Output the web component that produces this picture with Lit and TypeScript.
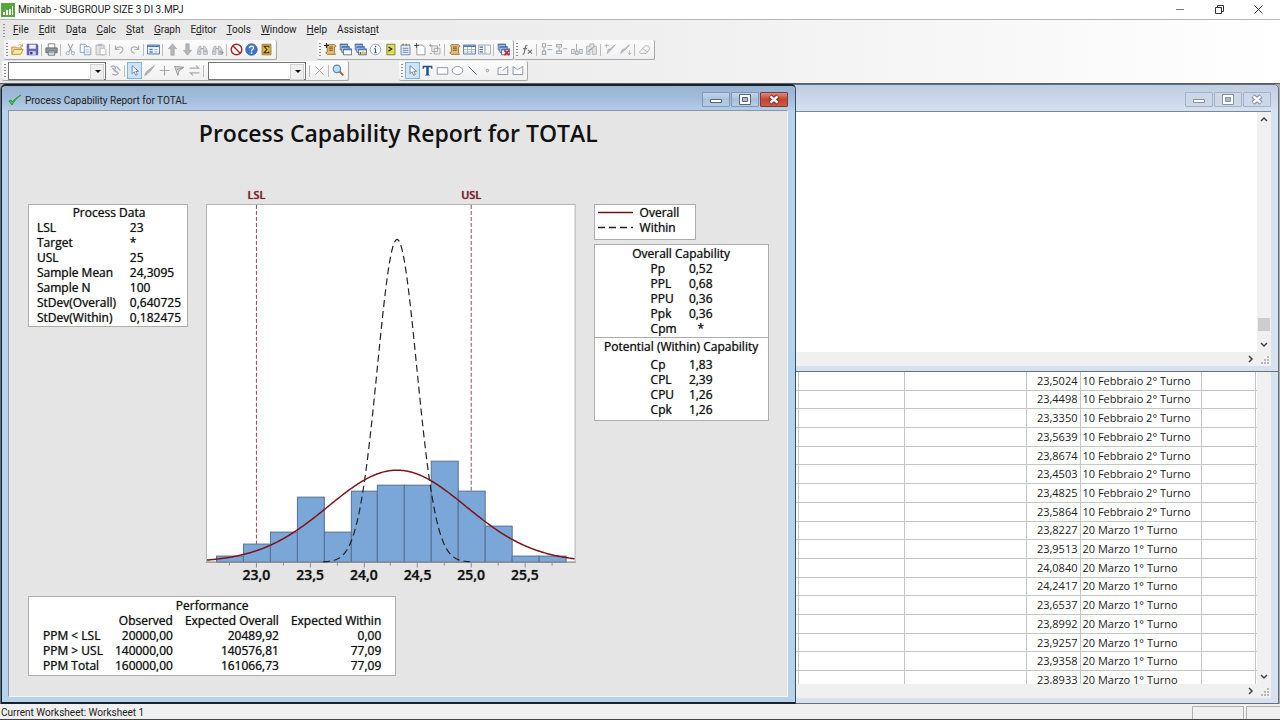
import { LitElement, css, html, svg, nothing, type TemplateResult, type SVGTemplateResult } from "lit";
import { customElement } from "lit/decorators.js";
import { classMap } from "lit/directives/class-map.js";

const GREY = "#a9acb0";
const NAVY = "#3d5a8a";

const scroll = svg`<path d="M4 2h9l2 2-2 1v7l1 2H4l-2-2 2-1V5L3 3z" fill="#e3bd72" stroke="#8f6b2c"/><path d="M6 5h5M6 7h5M6 9h5" stroke="#6d4f1c"/>`;
const windows = svg`<path d="M1.500 1.500h9v7h-9z" fill="#e9f1fb" stroke="${NAVY}"/><path d="M1 1h10v2H1z" fill="#4d79b8"/><path d="M3.500 4.500h9v7h-9z" fill="#e9f1fb" stroke="${NAVY}"/><path d="M3 4h10v2H3z" fill="#4d79b8"/><path d="M5.500 7.500h10v7h-10z" fill="#fff" stroke="${NAVY}"/><path d="M5 7h11v2H5z" fill="#4d79b8"/>`;
const arrow = svg`<path d="M5 2v10l2.500-2.500L9.500 14l2-1-2-4h3.500z" fill="#fff" stroke="#5c7390"/>`;
const binoculars = svg`<path d="M2 14V9l2-5h2v10zM9 14V4h2l3 5v5z" fill="#d6d8da" stroke="${GREY}"/><path d="M6 7h3M3 10h2M10 10h3" stroke="#85888c"/>`;

const ICONS: Record<string, SVGTemplateResult> = {
  open: svg`<path d="M1 14V5h5l1 1h6v3" fill="#f6d98c" stroke="#b58a2c"/><path d="M1 14l3-6h11l-3 6z" fill="#fbe6a4" stroke="#b58a2c"/><path d="M9 3c2-2 4-1 5 1m0-3v3h-3" fill="none" stroke="#c79a3a"/>`,
  save: svg`<path d="M1.500 1.500h12l1 1v12h-13z" fill="#6a65b4" stroke="#4a4794"/><path d="M4 2h8v5H4z" fill="#eef0fa"/><path d="M4 10h8v5H4z" fill="#c9cce6"/><path d="M5 11h3v3H5z" fill="#3d3a86"/>`,
  print: svg`<path d="M4 6V1h8v5" fill="#fff" stroke="#6d747c"/><path d="M1 6h14v6H1z" fill="#8e959c" stroke="#5e656c"/><path d="M4 10h8v5H4z" fill="#e8ecef" stroke="#5e656c"/><path d="M5 12h6" stroke="#6b8f6b"/>`,
  cut: svg`<path d="M5 1l5 10M11 1L6 11" stroke="#9fa2a6" stroke-width="1.300" fill="none"/><circle cx="4.500" cy="12.500" r="2" fill="none" stroke="#9fa2a6"/><circle cx="11" cy="12.500" r="2" fill="none" stroke="#9fa2a6"/>`,
  copy: svg`<path d="M1.500 1.500h6l2 2v8h-8z" fill="#fff" stroke="#7d8fa8"/><path d="M6.500 4.500h6l2 2v8h-8z" fill="#f4f8fd" stroke="#7d8fa8"/><path d="M8 8h4M8 10h5M8 12h5" stroke="#b6c3d4"/>`,
  paste: svg`<path d="M2.500 2.500h10v12h-10z" fill="#e3e4e6" stroke="${GREY}"/><path d="M5 1h5v3H5z" fill="#b8babd"/><path d="M7.500 6.500h5l2 2v6h-7z" fill="#fff" stroke="${GREY}"/>`,
  undo: svg`<path d="M3 3v5h5M3 8c3-5 10-4 9 1-.5 2-2 3-4 4" fill="none" stroke="${GREY}" stroke-width="1.500"/>`,
  redo: svg`<path d="M13 3v5H8M13 8C10 3 3 4 4 9c.5 2 2 3 4 4" fill="none" stroke="${GREY}" stroke-width="1.500"/>`,
  dialog: svg`<path d="M.5 2.500h15v11H.5z" fill="#eff5fc" stroke="${NAVY}"/><path d="M1 3h14v2H1z" fill="#4d79b8"/><path d="M3 7h4v2H3zM3 10h4v2H3z" fill="#5d7fb0"/><path d="M9 8h4M9 11h4" stroke="#8fa8c8"/>`,
  up: svg`<path d="M8 1l5 6h-3v8H6V7H3z" fill="#b4b6b9" stroke="#a6a9ac"/>`,
  down: svg`<path d="M8 15l5-6h-3V1H6v8H3z" fill="#b4b6b9" stroke="#a6a9ac"/>`,
  find: binoculars,
  findNext: svg`${binoculars}<path d="M10 12h5m-2-2l2 2-2 2" stroke="#85888c" fill="none"/>`,
  stop: svg`<circle cx="8" cy="8" r="6.500" fill="#fff" stroke="#a02a2a" stroke-width="1.800"/><path d="M3.500 3.500l9 9" stroke="#a02a2a" stroke-width="1.800"/>`,
  help: svg`<circle cx="8" cy="8" r="7" fill="#3c78c8" stroke="#2a5898"/><path d="M5.500 6.500c0-3.500 5-3.500 5-.5 0 2-2.500 2-2.500 4" fill="none" stroke="#fff" stroke-width="1.700"/><path d="M7 11.500h2v2H7z" fill="#fff"/>`,
  sigma: svg`<path d="M2.500 1.500h11v13h-11z" fill="#dcb64c" stroke="#94752a"/><path d="M11 5.500V4H5l3.500 4L5 12h6v-1.500" fill="none" stroke="#33290c" stroke-width="1.300"/>`,
  addScroll: svg`${scroll}<path d="M3 0v6M0 3h6" stroke="#222" stroke-width="1.300"/>`,
  scroll,
  windows,
  graphs: svg`${windows}<path d="M7 11h2v3H7z" fill="#2d7d46"/><path d="M10 10h2v4h-2z" fill="#d7b42a"/><path d="M13 11h1v3h-1z" fill="#c0392b"/>`,
  info: svg`<circle cx="8" cy="8" r="6.500" fill="#fff" stroke="#8395ad"/><path d="M8 7v5M6.500 7H8M6.500 12h3M8 3.500v1.700" stroke="#2d5a9c" stroke-width="1.500" fill="none"/>`,
  session: svg`<path d="M3.500 1.500h10v13h-10z" fill="#dde04f" stroke="#6c7034"/><path d="M5.500 5l4 2.500-4 2.500" fill="none" stroke="#222" stroke-width="1.500"/>`,
  notepad: svg`<path d="M2.500 2.500h11v12h-11z" fill="#e7eefb" stroke="#5a74a8"/><path d="M4 2h2M8 2h2M12 2h1" stroke="#9a7b2b" stroke-width="2"/><path d="M4.500 6.500h7M4.500 9h7M4.500 11.500h7" stroke="#5a74a8"/>`,
  newPage: svg`<path d="M3.500 2.500h7l3 3v9h-10z" fill="#fff" stroke="#888"/><path d="M3 0v6M0 3h6" stroke="#333"/>`,
  layers: svg`<path d="M3.500 3.500h7v7h-7zM6.500 6.500h7v7h-7z" fill="#f1f1f2" stroke="#9a9da1"/><path d="M2 1v4M0 3h4M13 1v3M1 13h3" stroke="#9a9da1"/>`,
  table: svg`<path d="M.5 2.500h15v11H.5z" fill="#fff" stroke="${NAVY}"/><path d="M1 3h14v2H1z" fill="#4d79b8"/><path d="M1 8h14M1 11h14M5.500 5v8M10.500 5v8" stroke="#9db2d0"/>`,
  panel: svg`<path d="M.5 2.500h15v11H.5z" fill="#f4f6f8" stroke="#8d99a8"/><path d="M8.500 3v10" stroke="#8d99a8"/><path d="M2 5h4M2 8h4M2 11h4" stroke="#49699b" stroke-width="1.400"/>`,
  closeAll: svg`${windows}<path d="M9 9l6 6M15 9l-6 6" stroke="#d0202a" stroke-width="2"/>`,
  fx: svg`<path d="M8 3c-2-1-2.500 1-3 4l-1 5c-.3 1.500-1 2-2 1.500M2.500 7h5M8.500 8.500l5 4.500M13.500 8.500l-5 4.500" fill="none" stroke="#6f7276" stroke-width="1.400"/>`,
  tree1: svg`<path d="M3 1h4v4H3zM3 10h4v4H3zM5 5v5M9 3h6M9 8h6" fill="none" stroke="${GREY}" stroke-width="1.300"/>`,
  tree2: svg`<path d="M2 2h6v3H2zM2 10h6v3H2zM5 5v5M10 7h5" fill="none" stroke="${GREY}" stroke-width="1.300"/>`,
  tree3: svg`<path d="M8 1v9M2 8h3v5H2zM7 10h3v4H7zM12 8h3v5h-3z" fill="none" stroke="${GREY}" stroke-width="1.300"/>`,
  group: svg`<path d="M2 4h4V1h5v3h3v10H9V8H6v6H2z" fill="#e0e1e3" stroke="${GREY}"/><path d="M3 11l9-7" stroke="#8d9094"/>`,
  brushUp: svg`<path d="M14 2L8 9l-4 4 1-5 3-1z" fill="#c4c6c9" stroke="${GREY}"/><path d="M3 1v5M1 3h5" stroke="${GREY}"/>`,
  brushDown: svg`<path d="M13 2L7 9l-5 4 2-5 3-1z" fill="#c4c6c9" stroke="${GREY}"/><path d="M13 9v5M11 12l2 2 2-2" stroke="${GREY}" fill="none"/>`,
  eraser: svg`<path d="M2 11l6-7c3-2 7 0 6 4l-4 5H4c-2 0-2-1-2-2zM6 7l6 4" fill="#f1f1f2" stroke="${GREY}"/>`,
  editGroup: svg`<path d="M2 4c3-4 8 0 5 3s4 1 4 4-6 3-7 1M4 5l8 7M9 3l5 5" fill="none" stroke="${GREY}" stroke-width="1.500"/>`,
  select: arrow,
  brush: svg`<path d="M14 2L9 9c-2 1-3 4-7 5 1-2 1-4 4-6z" fill="#b4b6b9" stroke="#a3a6aa"/>`,
  plus: svg`<path d="M8 2v12M2 8h12" stroke="#a3a6aa" stroke-width="1.400"/>`,
  flag: svg`<path d="M2 3l11 1-6 5-1 5zM13 4L5 7" fill="#d5d6d8" stroke="#97999d" stroke-width="1.200"/>`,
  swap: svg`<path d="M2 5h11l-3-3M14 11H3l3 3" fill="none" stroke="#a6a8ab" stroke-width="1.500"/>`,
  cross: svg`<path d="M3 3l10 10M13 3L3 13" stroke="#a6a8ab" stroke-width="1.200"/>`,
  zoom: svg`<path d="M9 9l5 5" stroke="#a86a2c" stroke-width="2.500"/><circle cx="6" cy="6" r="4.500" fill="#bfe0fa" stroke="#5b87b8" stroke-width="1.500"/>`,
  text: svg`<path d="M2 2h12v4h-1l-1-2H9.500v9l2 1H4.500l2-1V4H4L3 6H2z" fill="#1f4e94"/>`,
  rect: svg`<path d="M1.500 4.500h13v8h-13z" fill="#fff" stroke="#7583a0"/>`,
  ellipse: svg`<ellipse cx="8" cy="8" rx="6.500" ry="5" fill="#fff" stroke="#7583a0"/>`,
  line: svg`<path d="M3 3l10 10" stroke="#53688f" stroke-width="1.200"/>`,
  marker: svg`<circle cx="8" cy="8" r="1.500" fill="#fff" stroke="#7583a0"/>`,
  polyline: svg`<path d="M7 4L2.500 5v8h12V3L8 8" fill="none" stroke="#7583a0"/>`,
  polygon: svg`<path d="M2.500 3v10h12V3L8 7z" fill="#fff" stroke="#7583a0"/>`,
};

type Item = [string, string] | "|";

const STANDARD: Item[] = [
  ["open", "Open"], ["save", "Save"], "|", ["print", "Print"], "|",
  ["cut", "Cut"], ["copy", "Copy"], ["paste", "Paste"], "|",
  ["undo", "Undo"], ["redo", "Redo"], "|", ["dialog", "Edit last dialog"], "|",
  ["up", "Previous command"], ["down", "Next command"], ["find", "Find"], ["findNext", "Find next"], "|",
  ["stop", "Cancel"], ["help", "Help"], ["sigma", "StatGuide"],
];
const PROJECT: Item[] = [
  ["addScroll", "Show session folder"], ["windows", "Show worksheets folder"], ["graphs", "Show graphs folder"],
  ["info", "Show info"], ["session", "Show history"], ["notepad", "Show report pad"],
  ["newPage", "Related documents"], ["layers", "Show design"], "|",
  ["scroll", "Session window"], ["table", "Current data window"], ["panel", "Project manager"], "|",
  ["closeAll", "Close all graphs"],
];
const WORKSHEET: Item[] = [
  ["fx", "Assign formula"], "|", ["tree1", "Insert cell"], ["tree2", "Insert row"], ["tree3", "Insert column"],
  ["group", "Move columns"], "|", ["brushUp", "Previous brushed row"], ["brushDown", "Next brushed row"], "|",
  ["eraser", "Clear"],
];
const GRAPH_TOOLS: Item[] = [
  ["select", "Select"], ["brush", "Brush"], ["plus", "Crosshairs"], ["flag", "Plant flag"], ["swap", "Swap"],
];
const DRAWING: Item[] = [
  ["select", "Select object"], ["text", "Text"], ["rect", "Rectangle"], ["ellipse", "Ellipse"],
  ["line", "Line"], ["marker", "Marker"], ["polyline", "Polyline"], ["polygon", "Polygon"],
];

const MENUS: [string, string, string][] = [
  ["", "F", "ile"], ["", "E", "dit"], ["D", "a", "ta"], ["", "C", "alc"], ["", "S", "tat"], ["", "G", "raph"],
  ["E", "d", "itor"], ["", "T", "ools"], ["", "W", "indow"], ["", "H", "elp"], ["Assista", "n", "t"],
];

const PROCESS_DATA = [
  ["LSL", "23"], ["Target", "*"], ["USL", "25"], ["Sample Mean", "24,3095"], ["Sample N", "100"],
  ["StDev(Overall)", "0,640725"], ["StDev(Within)", "0,182475"],
];
const OVERALL = [["Pp", "0,52"], ["PPL", "0,68"], ["PPU", "0,36"], ["Ppk", "0,36"], ["Cpm", "*"]];
const POTENTIAL = [["Cp", "1,83"], ["CPL", "2,39"], ["CPU", "1,26"], ["Cpk", "1,26"]];
const PERFORMANCE = [
  ["PPM < LSL", "20000,00", "20489,92", "0,00"],
  ["PPM > USL", "140000,00", "140576,81", "77,09"],
  ["PPM Total", "160000,00", "161066,73", "77,09"],
];

const FEB = "10 Febbraio 2° Turno";
const MAR = "20 Marzo 1° Turno";
const ROWS = [
  ["23,5024", FEB], ["23,4498", FEB], ["23,3350", FEB], ["23,5639", FEB], ["23,8674", FEB], ["23,4503", FEB],
  ["23,4825", FEB], ["23,5864", FEB], ["23,8227", MAR], ["23,9513", MAR], ["24,0840", MAR], ["24,2417", MAR],
  ["23,6537", MAR], ["23,8992", MAR], ["23,9257", MAR], ["23,9358", MAR], ["23,8933", MAR],
];

@customElement("capability-chart")
class CapabilityChart extends LitElement {
  static styles = css`
    :host { display: block; }
    .chart { display: block; width: 100%; font-family: "Open Sans", "Noto Sans", sans-serif; font-weight: 600; }
    .limit { font-size: 11px; fill: #8b1a2b; text-anchor: middle; }
    .tick { font-size: 14px; fill: #111; text-anchor: middle; }
  `;

  private counts = [1, 3, 5, 11, 5, 12, 13, 13, 17, 12, 6, 1, 1];
  private left = 0.5;
  private top = 20.5;
  private right = 369.5;
  private base = 378.5;

  private x(value: number) {
    return 50.5 + (value - 23) * 107.5;
  }

  private curve(sigma: number, from: number, to: number) {
    const mean = 24.3095;
    const peak = (92 * 0.640725) / sigma;
    const points: string[] = [];
    for (let px = from; px <= to; px += 1) {
      const z = ((px - 50.5) / 107.5 + 23 - mean) / sigma;
      points.push(`${px},${(this.base - peak * Math.exp((-z * z) / 2)).toFixed(2)}`);
    }
    return points.join(" ");
  }

  render() {
    const ticks = Array.from({ length: 13 }, (_, i) => 22.75 + i * 0.25);
    return html`<svg class="chart" viewBox="0 0 370 402" role="img" aria-label="Capability histogram">
      <rect x=${this.left} y=${this.top} width=${this.right - this.left} height=${this.base - this.top} fill="#fff" stroke="#b3b3b3"></rect>
      ${[["LSL", 23], ["USL", 25]].map(([name, v]) => svg`
        <text class="limit" x=${this.x(v as number)} y="15">${name}</text>
        <path d="M${Math.floor(this.x(v as number)) + 0.5} 21V378" stroke="#9a4a52" stroke-dasharray="4 2"/>`)}
      ${this.counts.map((n, i) => {
        const x0 = Math.round(this.x(22.625 + i * 0.25)) + 0.5;
        const x1 = Math.round(this.x(22.875 + i * 0.25)) + 0.5;
        const h = Math.round(n * 5.92);
        return svg`<rect x=${x0} y=${this.base - h} width=${x1 - x0} height=${h} fill="#7ba6d8" stroke="#56708f"/>`;
      })}
      <path d="M0 378.5H370" stroke="#8d8d8d"/>
      ${ticks.map((v, i) => svg`<path d="M${Math.floor(this.x(v)) + 0.5} 379v${i % 2 ? 5 : 3}" stroke="#8d8d8d"/>`)}
      <polyline points=${this.curve(0.182475, 117, 264)} fill="none" stroke="#222" stroke-width="1.2" stroke-dasharray="7 4"></polyline>
      <polyline points=${this.curve(0.640725, 1, 369)} fill="none" stroke="#7c1518" stroke-width="1.5"></polyline>
      ${["23,0", "23,5", "24,0", "24,5", "25,0", "25,5"].map((t, i) => svg`<text class="tick" x=${this.x(23 + i * 0.5)} y="396">${t}</text>`)}
    </svg>`;
  }
}

@customElement("app-root")
class AppRoot extends LitElement {
  static styles = css`
    :host {
      display: flex; flex-direction: column; height: 100vh; overflow: hidden; box-sizing: border-box;
      font: 10px/14px Roboto, "Noto Sans", sans-serif; color: #222; background: #f0f0f0;
    }
    * { box-sizing: border-box; }
    button { font: inherit; color: inherit; background: none; border: 0; padding: 0; margin: 0; }
    svg { display: block; }
    table { border-collapse: collapse; border-spacing: 0; }
    td, th { padding: 0; font-weight: inherit; text-align: left; }

    .titlebar { display: flex; align-items: center; height: 20px; background: #fff; border-bottom: 1px solid #b5b5b5; padding: 0 2px 0 1px; gap: 3px; flex: none; }
    .titlebar h1 { font: inherit; margin: 0; flex: 1; }
    .captions { display: flex; }
    .caption-button { width: 39px; height: 19px; display: grid; place-items: center; }

    .bars { flex: none; background: linear-gradient(90deg, #e6e6e6, #efefef 50%, #fff); }
    .menubar { display: flex; height: 20px; align-items: center; gap: 10px; padding-left: 3px; }
    .grip { flex: none; width: 2px; height: 13px; background: repeating-linear-gradient(#8f8f8f 0 1px, transparent 1px 3px); }
    .menubar .grip { margin-right: -2px; }
    .toolrow { display: flex; height: 21px; }
    .toolrow + .toolrow { height: 22px; }
    .toolbar { display: flex; align-items: center; height: 20px; padding: 0 2px; background: linear-gradient(#fcfcfc, #f0f0f0); border-right: 1px solid #a8a8a8; border-bottom: 1px solid #a8a8a8; border-radius: 2px; }
    .standard { margin-left: 4px; }
    .project { margin-left: 40px; }
    .graph-tools { margin-left: 2px; }
    .drawing { margin-left: 50px; }
    .tool { width: 15px; height: 17px; display: grid; place-items: center; flex: none; }
    .grip + .tool { margin-left: 2px; }
    .selected { background: #cfe5f7; outline: 1px solid #7db3de; outline-offset: -1px; }
    .separator { width: 1px; height: 12px; background: #bcbcbc; margin: 0 2px 0 1px; flex: none; }
    .combo { position: relative; display: block; width: 98px; height: 18px; margin: 0 2px; }
    .combo select { appearance: none; width: 100%; height: 100%; border: 1px solid #777; background: #fff; border-radius: 0; font: inherit; padding: 0; }
    .combo::after { content: ""; position: absolute; right: 2px; top: 2px; width: 12px; height: 14px; pointer-events: none; background: #efefef; border: 1px solid #d2d2d2; }
    .combo::before { content: ""; position: absolute; z-index: 1; right: 5px; top: 8px; pointer-events: none; border: 3px solid transparent; border-top-color: #111; border-bottom: 0; }

    .workspace { position: relative; flex: 1; min-height: 0; background: #ababab; border-top: 1px solid #5a5d60; }
    .window { position: absolute; display: flex; flex-direction: column; border: 1px solid #5f7080; border-radius: 5px 5px 0 0; background: #d7e2ee; padding: 0 7px 5px 6px; }
    .session { left: 0; right: 1px; top: 0; height: 288px; }
    .worksheet { left: 0; right: 1px; top: 287px; bottom: 0; border-radius: 0; }
    .report { left: 1px; top: 0; bottom: 0; width: calc(62% + 1px); border: 2px solid #16242d; border-right: 1px solid #35505f; border-left-width: 1px; background: #b7d3ec; }
    .window-title { display: flex; align-items: center; height: 26px; flex: none; margin: 0 -7px 0 -6px; padding: 3px 7px 0 6px; gap: 1px; border-radius: 5px 5px 0 0; background: linear-gradient(#c0cddf, #d5e1f0); }
    .report .window-title { background: linear-gradient(#98b2d2, #a4bddb 55%, #b4cde8); height: 24px; }
    .window-title h2 { flex: 1; font: inherit; margin: 2px 0 0 2px; }
    .frame-button { width: 28px; height: 15px; display: grid; place-items: center; border: 1px solid #8198b4; border-radius: 1px; background: linear-gradient(#c3d6ea, #a8c1dd 50%, #b5cde6); }
    .session .frame-button { background: #ccd8e8; border-color: #a2b2c7; }
    .report .close { background: linear-gradient(#dc8a7c, #c4452e 50%, #cf5a41); border-color: #7e3a3a; }
    .client { flex: 1; min-height: 0; min-width: 0; border-top: 1px solid #7b8794; display: grid; grid-template: minmax(0, 1fr) 14px / minmax(0, 1fr) 14px; background: #fff; }
    .worksheet .client { border-top: 0; }
    .pane { overflow: hidden; background: #fff; }
    .vbar, .hbar { display: flex; background: #f0f0f0; align-items: center; }
    .vbar { flex-direction: column; justify-content: space-between; padding: 2px 0; }
    .thumb { width: 12px; height: 13px; background: #cdcdcd; margin-top: auto; margin-bottom: 9px; }
    .hbar { justify-content: flex-end; padding-right: 2px; }
    .corner { display: grid; place-items: end; padding: 2px; background: #f0f0f0; }

    .sheet { table-layout: fixed; width: 100%; height: 318px; font: 11px/14px "Open Sans", "Noto Sans", sans-serif; }
    .sheet td { border-right: 1px solid #c3c8c5; border-bottom: 1px solid #c3c8c5; white-space: nowrap; padding: 0 2px; }
    .sheet .number { text-align: right; }
    .w-edge { width: 2px; } .w-date { width: 121px; } .w-small { width: 54px; } .w-mid { width: 122px; } .w-wide { width: 106px; }
    .sheet .edge { padding: 0; border-right: 0; }

    .graph { flex: 1; min-height: 0; overflow: hidden; border: 1px solid #8896a3; border-right-color: #f5f5f5; border-bottom-color: #f5f5f5; background: #e5e5e5; padding: 0 18px 0 19px; color: #111; font: 12px/15px "Open Sans", "Noto Sans", sans-serif; text-shadow: 0 0 1px #555; }
    .graph h3 { font-size: 23px; line-height: 30px; font-weight: 600; text-align: center; margin: 7px 0 36px; text-shadow: none; }
    .layout { display: grid; grid-template-columns: 160px minmax(0, 1fr) 175px; column-gap: 18px; align-items: start; }
    .box { background: #fff; border: 1px solid #adadad; }
    .below { margin-top: 20px; }
    .box caption { text-align: center; }
    .process { padding: 0 8px 1px; }
    .process table, .capability table { width: 100%; }
    .process th { width: 93px; white-space: nowrap; }
    .process td { white-space: nowrap; }
    .process { padding-right: 6px; }
    .legend { width: 102px; height: 36px; padding: 0 3px; margin-bottom: 4px; }
    .legend div { display: flex; align-items: center; gap: 7px; }
    .capability { padding: 1px 0; }
    .capability + .capability { border-top: 0; }
    .capability th { width: 95px; padding-left: 56px; }
    .center { text-align: center; padding-right: 55px; }
    .potential { padding-bottom: 3px; }
    .potential caption { padding-bottom: 3px; }
    .performance { display: inline-block; padding: 1px 14px 2px; margin-top: 10px; }
    .performance thead th, .performance td { text-align: right; padding-left: 12px; white-space: nowrap; }

    .statusbar { flex: none; display: flex; height: 16px; padding: 2px 0 0 1px; border-bottom: 1px solid #444; background: #f0f0f0; gap: 2px; }
    .statusbar p { margin: 0; flex: 1; }
    .cell { width: 52px; border: 1px solid #b4b4b4; border-bottom: 0; }
    .cell.last { width: 34px; border-right: 0; }
  `;

  private icon(name: string) {
    return svg`<svg width="13" height="13" viewBox="0 0 16 16" fill="none">${ICONS[name]}</svg>`;
  }

  private tools(items: Item[], selected = -1) {
    return items.map((item, i) => item === "|"
      ? html`<span class="separator"></span>`
      : html`<button class=${classMap({ tool: true, selected: i === selected })} aria-label=${item[1]}>${this.icon(item[0])}</button>`);
  }

  private combo(label: string) {
    return html`<label class="combo"><select aria-label=${label}></select></label>`;
  }

  private frameButtons(active: boolean) {
    const ink = active ? "#56657a" : "#8592a5";
    const mark = active ? "#7b3030" : "#7f8ca0";
    return html`
      <button class="frame-button" aria-label="Minimize"><svg width="12" height="8"><path d="M.5 3.500h11v3H.5z" fill="#fff" stroke=${ink}/></svg></button>
      <button class="frame-button" aria-label="Maximize"><svg width="12" height="11"><path d="M.5.5h11v10H.5z" fill="#fff" stroke=${ink}/><path d="M3.500 3.500h5v4h-5z" fill="#a9bdd5" stroke=${ink}/></svg></button>
      <button class="frame-button close" aria-label="Close"><svg width="14" height="11" viewBox="0 0 14 11"><path d="M3 2l8 7M11 2L3 9" stroke=${mark} stroke-width="4.500"/><path d="M3.500 2.400l7 6.200M10.500 2.400L3.500 8.600" stroke="#fff" stroke-width="2.500"/></svg></button>`;
  }

  private chevron(d: string) {
    return html`<svg width="10" height="10" viewBox="0 0 10 10"><path d=${d} fill="none" stroke="#444" stroke-width="1.500"/></svg>`;
  }

  private scrollFrame(content: TemplateResult | typeof nothing, top: boolean) {
    return html`<div class="client">
      <div class="pane">${content}</div>
      <div class="vbar">
        ${top ? html`${this.chevron("M2 7l3-3 3 3")}<span class="thumb"></span>` : html`<span></span>`}
        ${this.chevron("M2 3l3 3 3-3")}
      </div>
      <div class="hbar">${this.chevron("M4 2l3 3-3 3")}</div>
      <div class="corner"><svg width="8" height="8"><path d="M6 0h2v2H6zM3 3h2v2H3zM6 3h2v2H6zM0 6h2v2H0zM3 6h2v2H3zM6 6h2v2H6z" fill="#b9b9b9"/></svg></div>
    </div>`;
  }

  private pairs(title: string, rows: string[][], centered = false) {
    return html`<table><caption>${title}</caption><tbody>
      ${rows.map(([k, v]) => html`<tr><th scope="row">${k}</th><td class=${centered ? "center" : ""}>${v}</td></tr>`)}
    </tbody></table>`;
  }

  render() {
    return html`
      <header class="titlebar">
        <svg width="14" height="14" viewBox="0 0 14 14"><path d="M0 0h14v14H0z" fill="#55a83c"/><path d="M2 9h2v3H2zM5 7h2v5H5zM8 6h2v6H8zM11 3h1v9h-1z" fill="#fff"/></svg>
        <h1>Minitab - SUBGROUP SIZE 3 DI 3.MPJ</h1>
        <div class="captions">
          <button class="caption-button" aria-label="Minimize"><svg width="9" height="9"><path d="M0 4.500h8" stroke="#777"/></svg></button>
          <button class="caption-button" aria-label="Restore"><svg width="9" height="9"><path d="M.5 2.500h6v6h-6zM2.500 2V.5h6v6H7" fill="none" stroke="#333"/></svg></button>
          <button class="caption-button" aria-label="Close"><svg width="9" height="9"><path d="M.5.5l8 8M8.500.5l-8 8" stroke="#333"/></svg></button>
        </div>
      </header>

      <div class="bars">
        <nav class="menubar"><span class="grip"></span>
          ${MENUS.map(([a, b, c]) => html`<button>${a}<u>${b}</u>${c}</button>`)}
        </nav>
        <div class="toolrow">
          <div class="toolbar standard"><span class="grip"></span>${this.tools(STANDARD)}</div>
          <div class="toolbar project"><span class="grip"></span>${this.tools(PROJECT)}</div>
          <div class="toolbar"><span class="grip"></span>${this.tools(WORKSHEET)}</div>
        </div>
        <div class="toolrow">
          <div class="toolbar graph-tools"><span class="grip"></span>${this.combo("Graph element")}
            ${this.tools([["editGroup", "Edit element"], "|"])}${this.tools(GRAPH_TOOLS, 0)}${this.tools(["|"])}
            ${this.combo("Group")}${this.tools(["|", ["cross", "Delete"], "|", ["zoom", "Zoom"]])}
          </div>
          <div class="toolbar drawing"><span class="grip"></span>${this.tools(DRAWING, 0)}</div>
        </div>
      </div>

      <main class="workspace">
        <section class="window session" aria-label="Session">
          <div class="window-title"><h2></h2>${this.frameButtons(false)}</div>
          ${this.scrollFrame(nothing, true)}
        </section>

        <section class="window worksheet" aria-label="Worksheet 1">
          ${this.scrollFrame(html`<table class="sheet">
            <colgroup><col /><col class="w-wide" /><col class="w-mid" /><col class="w-small" /><col class="w-date" /><col class="w-small" /><col class="w-edge" /></colgroup>
            <tbody>${ROWS.map(([value, date]) => html`<tr><td></td><td></td><td></td><td class="number">${value}</td><td>${date}</td><td></td><td class="edge"></td></tr>`)}</tbody>
          </table>`, false)}
        </section>

        <section class="window report" aria-label="Report">
          <div class="window-title">
            <svg width="14" height="12" viewBox="0 0 14 12"><path d="M1 7l3 4c2-4 5-7 9-10-4 2-7 5-9 7L3 6z" fill="#4cc552" stroke="#2b9a3a"/></svg>
            <h2>Process Capability Report for TOTAL</h2>${this.frameButtons(true)}
          </div>
          <div class="graph">
            <h3>Process Capability Report for TOTAL</h3>
            <div class="layout">
              <div class="box process below">${this.pairs("Process Data", PROCESS_DATA)}</div>
              <capability-chart></capability-chart>
              <div class="below">
                <div class="box legend">
                  <div><svg width="35" height="3"><path d="M0 1.500h35" stroke="#6b1416" stroke-width="1.500"/></svg>Overall</div>
                  <div><svg width="35" height="3"><path d="M0 1.500h35" stroke="#222" stroke-width="1.500" stroke-dasharray="7 4"/></svg>Within</div>
                </div>
                <div class="box capability">${this.pairs("Overall Capability", OVERALL, true)}</div>
                <div class="box capability potential">${this.pairs("Potential (Within) Capability", POTENTIAL, true)}</div>
              </div>
            </div>
            <div class="box performance"><table>
              <caption>Performance</caption>
              <thead><tr><td></td><th scope="col">Observed</th><th scope="col">Expected Overall</th><th scope="col">Expected Within</th></tr></thead>
              <tbody>${PERFORMANCE.map((r) => html`<tr><th scope="row">${r[0]}</th>${r.slice(1).map((v) => html`<td>${v}</td>`)}</tr>`)}</tbody>
            </table></div>
          </div>
        </section>
      </main>

      <footer class="statusbar"><p>Current Worksheet: Worksheet 1</p><span class="cell"></span><span class="cell last"></span></footer>
    `;
  }
}
